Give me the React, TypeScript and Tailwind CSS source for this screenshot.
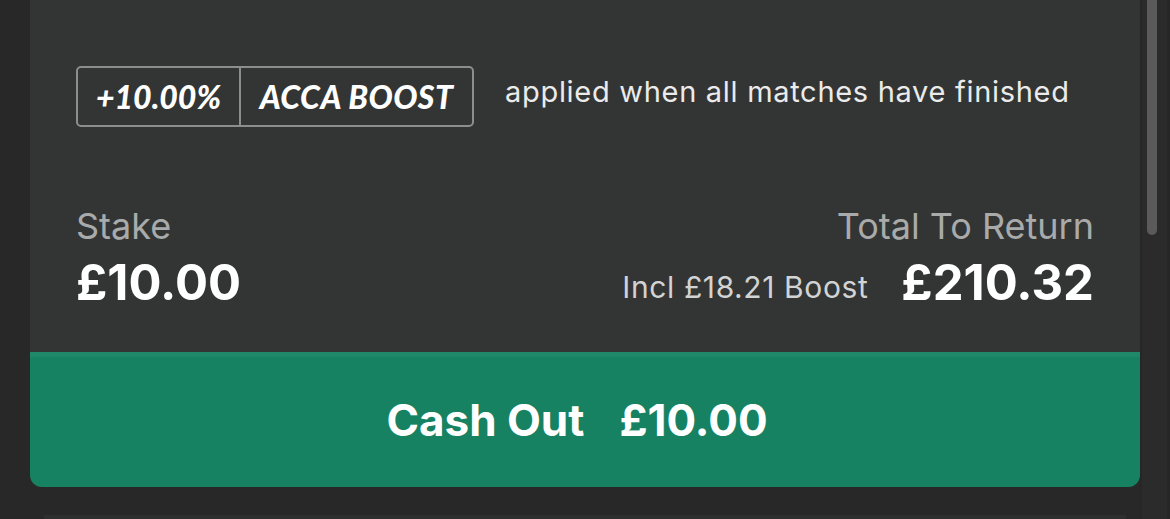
import React from "react";

export default function App() {
  return (
    <div className="w-[1170px] h-[519px] bg-[#282828] flex overflow-hidden relative" style={{ fontFamily: "Inter, 'Liberation Sans', sans-serif" }}>
      <div className="w-[30px] shrink-0" />
      <div className="w-[1110px] shrink-0 flex flex-col">
        <div className="bg-[#333535] rounded-b-[12px] overflow-hidden flex flex-col">
          <div className="px-[46px] pt-[66px] pb-[45px] flex flex-col">
            <div className="flex items-center">
              <div className="flex h-[61px] border-2 border-[#8c8e8e] rounded-[5px] text-white italic font-black text-[32px] leading-none" style={{ fontFamily: "Lato, 'DejaVu Sans', sans-serif" }}>
                <div className="w-[163px] flex items-center justify-center border-r-2 border-[#8c8e8e]">+10.00%</div>
                <div className="w-[231px] flex items-center justify-center tracking-[0.5px]">ACCA BOOST</div>
              </div>
              <div className="ml-[31px] mb-[10px] text-[29px] leading-none text-[#ebebeb] tracking-[0.7px]">applied when all matches have finished</div>
            </div>
            <div className="mt-[81px] flex justify-between">
              <div className="flex flex-col">
                <div className="text-[36px] leading-none text-[#a9abab]">Stake</div>
                <div className="mt-[14px] text-[49px] leading-none font-bold text-white">£10.00</div>
              </div>
              <div className="flex flex-col items-end">
                <div className="text-[36px] leading-none text-[#a9abab]">Total To Return</div>
                <div className="mt-[14px] flex items-end">
                  <div className="text-[30px] leading-none text-[#d2d3d3] tracking-[0.6px] mb-[5px]">Incl £18.21 Boost</div>
                  <div className="ml-[33px] text-[49px] leading-none font-bold text-white">£210.32</div>
                </div>
              </div>
            </div>
          </div>
          <div className="h-[136px] bg-[#178262] border-t-[5px] border-[#1f8868] pr-[16px] pb-[5px] flex items-center justify-center text-white font-bold text-[44px] leading-none">
            <span>Cash Out</span>
            <span className="ml-[35px]">£10.00</span>
          </div>
        </div>
        <div className="mt-[28px] mx-[14px] h-[4px] bg-[#2e2f2f]" />
      </div>
      <div className="w-[30px] shrink-0 flex">
        <div className="w-[2px] bg-[#262626]" />
        <div className="w-[25px] bg-[#2b2b2b] flex justify-center">
          <div className="ml-[-5px] w-[10px] h-[235px] bg-[#5a5a5a] rounded-b-full" />
        </div>
        <div className="w-[3px] bg-[#262626]" />
      </div>
    </div>
  );
}
